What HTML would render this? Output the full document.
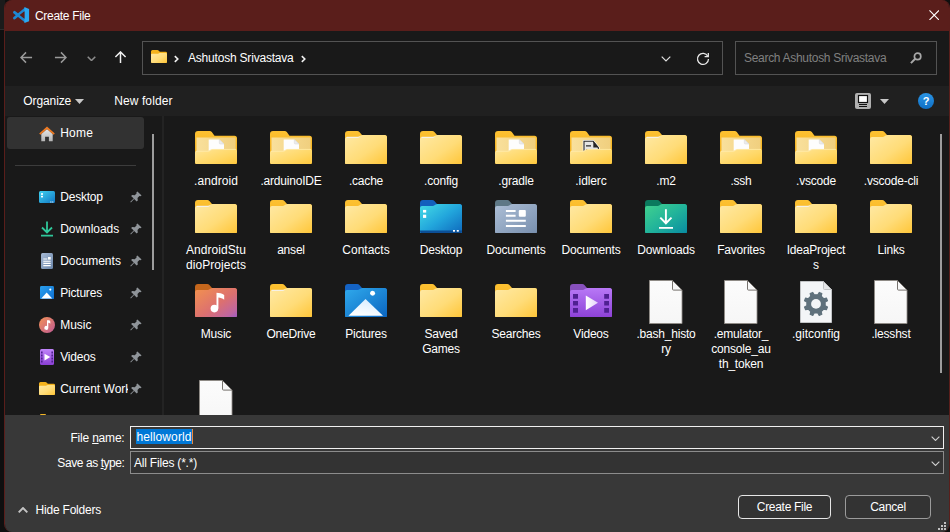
<!DOCTYPE html><html><head><meta charset="utf-8"><title>Create File</title><style>
*{box-sizing:border-box;margin:0;padding:0}
html,body{width:950px;height:532px;overflow:hidden;background:#000}
body{font-family:"Liberation Sans", sans-serif;font-size:12px;color:#fff;position:relative}
.abs{position:absolute}
#outer{position:absolute;left:0;top:0;width:950px;height:532px;background:#0f0f0f}
#strip{position:absolute;left:2px;top:0;width:3px;height:532px;background:#1a1a1a}
#win{position:absolute;left:4px;top:0;width:946px;height:532px;background:#191919;border-radius:8px;overflow:hidden;border-left:1px solid #5a1e1b;border-right:1px solid #5a1e1b}
#title{position:absolute;left:0;top:0;width:100%;height:31px;background:#5a1e1b}
#nav{position:absolute;left:0;top:31px;width:100%;height:55px;background:#191919}
#tool{position:absolute;left:0;top:86px;width:100%;height:30px;background:#202020}
#bottom{position:absolute;left:0;top:415px;width:100%;height:117px;background:#383838}
.box{position:absolute;border:1px solid #535353}
.t{position:absolute;line-height:16px;white-space:nowrap;color:#fff}
.lbl{position:absolute;text-align:center;width:85px;line-height:15px;color:#fff;font-size:12px}
.btn{position:absolute;height:24px;border:1px solid #9b9b9b;border-radius:4px;background:#333;text-align:center;line-height:22px;color:#fff}
</style></head><body>

<svg width="0" height="0" style="position:absolute">
<defs>
<linearGradient id="gTab" x1="0" y1="0" x2="0" y2="1"><stop offset="0" stop-color="#fdc131"/><stop offset="1" stop-color="#efab1d"/></linearGradient>
<linearGradient id="gFront" x1="0" y1="0" x2="1" y2="1"><stop offset="0" stop-color="#ffe9a4"/><stop offset="0.55" stop-color="#ffdc78"/><stop offset="1" stop-color="#ffc536"/></linearGradient>
<linearGradient id="gFlap" x1="0" y1="0" x2="1" y2="1"><stop offset="0" stop-color="#ffe69a"/><stop offset="0.6" stop-color="#ffd765"/><stop offset="1" stop-color="#ffc83c"/></linearGradient>
<linearGradient id="gInner" x1="0" y1="0" x2="1" y2="0"><stop offset="0" stop-color="#f9e09c"/><stop offset="1" stop-color="#f0cf7e"/></linearGradient>
<linearGradient id="gPage" x1="0" y1="0" x2="0" y2="1"><stop offset="0" stop-color="#fcfcfc"/><stop offset="1" stop-color="#f6f6f6"/></linearGradient>
<symbol id="folder" viewBox="0 0 42 33.400">
<path d="M0 3a3 3 0 0 1 3-3h9.300a3 3 0 0 1 2.100.900L17 4H39.500a2.500 2.500 0 0 1 2.500 2.500v24.400a2.500 2.500 0 0 1-2.500 2.500H2.500a2.500 2.500 0 0 1-2.500-2.500z" fill="url(#gTab)"/>
<path d="M0 7.900a2 2 0 0 1 2-2h10.800a3 3 0 0 0 1.700-.550l1.200-.800a3 3 0 0 1 1.700-.550H39.500a2.500 2.500 0 0 1 2.500 2.500v25a2.500 2.500 0 0 1-2.500 2.500H2.500a2.500 2.500 0 0 1-2.500-2.500z" fill="url(#gFront)"/>
<path d="M1.600 6.300h11.400a3 3 0 0 0 1.500-.450" stroke="#f4f4fa" stroke-width="1" fill="none"/>
</symbol>
<symbol id="folderE" viewBox="0 0 42 33.400">
<path d="M0 3a3 3 0 0 1 3-3h9.300a3 3 0 0 1 2.100.900L17 4H39.500a2.500 2.500 0 0 1 2.500 2.500v24.400a2.500 2.500 0 0 1-2.500 2.500H2.500a2.500 2.500 0 0 1-2.500-2.500z" fill="url(#gTab)"/>
<path d="M0 7.900a2 2 0 0 1 2-2h10.800a3 3 0 0 0 1.700-.550l1.200-.800a3 3 0 0 1 1.700-.550H39.500a2.500 2.500 0 0 1 2.500 2.500v25a2.500 2.500 0 0 1-2.500 2.500H2.500a2.500 2.500 0 0 1-2.500-2.500z" fill="url(#gFront)"/>
</symbol>
<symbol id="folderdoc" viewBox="0 0 42 33.400">
<path d="M0 3a3 3 0 0 1 3-3h11.700a3 3 0 0 1 2.100.900L19.500 4.700H39.500a2.500 2.500 0 0 1 2.500 2.500v23.700a2.500 2.500 0 0 1-2.500 2.500H2.500a2.500 2.500 0 0 1-2.500-2.500z" fill="url(#gTab)"/>
<path d="M1.500 6.400h39.100v15H1.500z" fill="url(#gInner)"/>
<path d="M13.700 8.600h10.600l4.700 4.400V21H13.700z" fill="#fdfdfd"/>
<path d="M24.300 8.600v3.400a1 1 0 0 0 1 1h3.700z" fill="#ececec" stroke="#d4d4d4" stroke-width=".5"/>
<path d="M0 21.800a2 2 0 0 1 2-2h11a3 3 0 0 0 1.700-.500l1.400-.900a3 3 0 0 1 1.700-.500H40a2 2 0 0 1 2 2v11a2.500 2.500 0 0 1-2.500 2.500H2.500a2.500 2.500 0 0 1-2.500-2.500z" fill="url(#gFlap)"/>
<path d="M1 20.300h12a3 3 0 0 0 1.700-.500l1.400-.900a3 3 0 0 1 1.700-.500H41" stroke="#ffeeb8" stroke-width=".8" fill="none" opacity=".8"/>
</symbol>
<symbol id="folderidl" viewBox="0 0 42 33.400">
<path d="M0 3a3 3 0 0 1 3-3h11.700a3 3 0 0 1 2.100.900L19.500 4.700H39.500a2.500 2.500 0 0 1 2.500 2.500v23.700a2.500 2.500 0 0 1-2.500 2.500H2.500a2.500 2.500 0 0 1-2.500-2.500z" fill="url(#gTab)"/>
<path d="M1.500 6.400h39.100v15H1.500z" fill="url(#gInner)"/>
<path d="M13.200 9.500h10.400l5.600 6.800V21H13.200z" fill="#e9e9e9" stroke="#ffffff" stroke-width=".8"/>
<path d="M14 10.300h9.200l5.200 6.300V21H14z" fill="#e4e4e4" stroke="#2b2b2b" stroke-width="1.100"/>
<path d="M23.300 10.300v6.300h5.200z" fill="#262626"/>
<path d="M16 14.900h5M16 18.500h3" stroke="#2b2b2b" stroke-width="1.100"/>
<path d="M0 21.800a2 2 0 0 1 2-2h11a3 3 0 0 0 1.700-.500l1.400-.900a3 3 0 0 1 1.700-.500H40a2 2 0 0 1 2 2v11a2.500 2.500 0 0 1-2.500 2.500H2.500a2.500 2.500 0 0 1-2.500-2.500z" fill="url(#gFlap)"/>
<path d="M1 20.300h12a3 3 0 0 0 1.700-.500l1.400-.900a3 3 0 0 1 1.700-.500H41" stroke="#ffeeb8" stroke-width=".8" fill="none" opacity=".8"/>
</symbol>
<symbol id="folder16" viewBox="0 0 16 13">
<path d="M0 1.500a1.500 1.500 0 0 1 1.500-1.500h5a1.500 1.500 0 0 1 1.050.430L8.800 1.700h5.900a1.300 1.300 0 0 1 1.300 1.300v8.700a1.300 1.300 0 0 1-1.300 1.300H1.300a1.300 1.300 0 0 1-1.300-1.300z" fill="#f4b21c"/>
<path d="M0 4.800a1 1 0 0 1 1-1h5.700a1.500 1.500 0 0 0 .8-.230l.5-.340a1.500 1.500 0 0 1 .8-.230h5.900a1.300 1.300 0 0 1 1.300 1.300v7.400a1.300 1.300 0 0 1-1.300 1.300H1.300a1.300 1.300 0 0 1-1.300-1.300z" fill="url(#gFront)"/>
</symbol>
<symbol id="file" viewBox="0 0 33.600 44">
<path d="M.5.500h23l9.600 9.600V43.500H.5z" fill="url(#gPage)" stroke="#8f8b86" stroke-width="1"/>
<path d="M23.500.5v8.600a1 1 0 0 0 1 1h8.600z" fill="#f7f7f7" stroke="#77736e" stroke-width="1"/>
</symbol>
<symbol id="pin" viewBox="0 0 12 12">
<path d="M7.400.4l4.200 4.200-1.200.7-1-.3-1.900 1.900.3 2.600-1.100 1-2.600-2.600-3.200 3.500-.6-.6 3.400-3.300L1.100 4.900l1.100-1 2.600.3 1.900-1.900-.3-1z" fill="#8f9499"/>
</symbol>
</defs>
</svg>

<div id="outer"></div><div class="abs" style="left:0;top:0;width:5px;height:29px;background:#1b1b1b"></div><div class="abs" style="left:0;top:29px;width:5px;height:1px;background:#2c2c2c"></div>
<div id="win">
<div id="title">
<svg class="abs" style="left:7px;top:0px" width="20" height="31" viewBox="0 0 20 31"><path d="M2.500 12.300L13 20.600M2.500 18L13 9.400" stroke="#1d88d4" stroke-width="2.900" stroke-linecap="round" fill="none"/><path d="M12.400 7.100l4.700 1.900v12.200l-4.700 1.900z" fill="#2ba8f1"/><path d="M12.400 11.300L7.700 15l4.700 3.700z" fill="#5a1e1b"/></svg>
<div class="t" style="left:30px;top:8px;letter-spacing:-0.3px;">Create File</div>
<svg class="abs" style="left:923.7px;top:9.700px" width="10.400" height="10.400" viewBox="0 0 11 11"><path d="M.5.500l10 10M10.500.5l-10 10" stroke="#fff" stroke-width="1.150" fill="none"/></svg>
</div>
<div id="nav">
<svg class="abs" style="left:14.5px;top:20.4px" width="13" height="13" viewBox="0 0 14 14"><path d="M13 7H1.500M6.500 1.500L1 7l5.500 5.500" stroke="#9a9a9a" stroke-width="1.600" fill="none"/></svg>
<svg class="abs" style="left:48.8px;top:20.4px" width="13" height="13" viewBox="0 0 14 14"><path d="M1 7h11.500M7.500 1.500L13 7l-5.500 5.500" stroke="#9a9a9a" stroke-width="1.600" fill="none"/></svg>
<svg class="abs" style="left:82px;top:24.5px" width="9" height="5.400" viewBox="0 0 10 6"><path d="M.8.800L5 5l4.200-4.200" stroke="#8c8c8c" stroke-width="1.700" fill="none"/></svg>
<svg class="abs" style="left:109px;top:20.4px" width="13" height="13" viewBox="0 0 14 14"><path d="M7 13V1.500M1.500 6.500L7 1l5.500 5.500" stroke="#f0f0f0" stroke-width="1.600" fill="none"/></svg>
<div class="box" style="left:137px;top:10px;width:581px;height:34px"></div>
<svg class="abs" style="left:146px;top:19px" width="16" height="13"><use href="#folder16" width="16" height="13"/></svg>
<svg class="abs" style="left:168.8px;top:23.6px" width="5" height="8" viewBox="0 0 5 8"><path d="M.8 1.100L3.800 4 .8 6.900" stroke="#f0f0f0" stroke-width="1.600" fill="none"/></svg>
<div class="t" style="left:183px;top:19px;letter-spacing:-0.2px;">Ashutosh Srivastava</div>
<svg class="abs" style="left:296px;top:23.6px" width="5" height="8" viewBox="0 0 5 8"><path d="M.8 1.100L3.800 4 .8 6.900" stroke="#f0f0f0" stroke-width="1.600" fill="none"/></svg>
<svg class="abs" style="left:656px;top:25px" width="10" height="6" viewBox="0 0 10 6"><path d="M.7.700L5 5 9.300.7" stroke="#e0e0e0" stroke-width="1.200" fill="none"/></svg>
<svg class="abs" style="left:691px;top:21px" width="14" height="14" viewBox="0 0 14 14"><path d="M11.800 4.200A5.500 5.500 0 1 0 12.500 7" stroke="#e8e8e8" stroke-width="1.300" fill="none"/><path d="M12.300 1v3.700H8.600" stroke="#e8e8e8" stroke-width="1.300" fill="none"/></svg>
<div class="box" style="left:730px;top:10px;width:202px;height:34px"></div>
<div class="t" style="left:739px;top:19px;letter-spacing:-0.3px;color:#808080;">Search Ashutosh Srivastava</div>
<svg class="abs" style="left:905px;top:21px" width="12" height="12" viewBox="0 0 12 12"><circle cx="7.600" cy="4.400" r="3.200" stroke="#a8a8a8" stroke-width="1.700" fill="none"/><path d="M5.200 6.800L.9 11.100" stroke="#a8a8a8" stroke-width="2"/></svg>
</div>
<div id="tool">
<div class="t" style="left:18.3px;top:7px;letter-spacing:-0.1px;">Organize</div>
<svg class="abs" style="left:70px;top:13px" width="9" height="5" viewBox="0 0 9 5"><path d="M0 0h9L4.500 5z" fill="#c8c8c8"/></svg>
<div class="t" style="left:109.2px;top:7px;letter-spacing:0.1px;">New folder</div>
<svg class="abs" style="left:850px;top:7px" width="16" height="16" viewBox="0 0 16 16"><rect width="16" height="16" rx="2" fill="#b0b0b0"/><rect x="3.500" y="2.500" width="9" height="7" fill="#fff" stroke="#111" stroke-width="1.200"/><path d="M4 11.500h8M4 13.500h8" stroke="#111" stroke-width="1"/></svg>
<svg class="abs" style="left:875px;top:13px" width="9" height="5" viewBox="0 0 9 5"><path d="M0 0h9L4.500 5z" fill="#c8c8c8"/></svg>
<svg class="abs" style="left:913px;top:7px" width="16" height="16" viewBox="0 0 16 16"><defs><linearGradient id="gh" x1="0" y1="0" x2="0" y2="1"><stop offset="0" stop-color="#2a95e6"/><stop offset="1" stop-color="#0f6fc4"/></linearGradient></defs><circle cx="8" cy="8" r="8" fill="url(#gh)"/><text x="8" y="12" text-anchor="middle" font-family='"Liberation Sans",sans-serif' font-weight="bold" font-size="11" fill="#fff">?</text></svg>
</div>
<div class="abs" style="left:2px;top:117px;width:137px;height:31.500px;background:#323232;border-radius:3px"></div>
<div class="abs" style="left:10px;top:165px;width:121px;height:1px;background:#3c3c3c"></div>
<div class="abs" style="left:147px;top:134px;width:2px;height:136px;background:#9d9d9d"></div>
<div class="abs" style="left:157px;top:116px;width:2px;height:299px;background:#232323"></div>
<div class="abs" style="left:935px;top:134px;width:2px;height:239px;background:#9d9d9d"></div>
<svg class="abs" style="left:34px;top:125.5px" width="16" height="16" viewBox="0 0 16 16"><defs><linearGradient id="ghm" x1="0" y1="0" x2="0" y2="1"><stop offset="0" stop-color="#e6e6e6"/><stop offset="1" stop-color="#b4b4b4"/></linearGradient></defs><path d="M2.300 8L8 3l5.700 5v7.300H9.900v-4.500H6.100v4.500H2.300z" fill="url(#ghm)"/><path d="M8 .4L.2 7.400l1.200 1.400L8 3l6.600 5.800 1.200-1.400z" fill="#ee7a22"/></svg>
<div class="t" style="left:55.2px;top:125px;letter-spacing:0.25px;">Home</div>
<svg class="abs" style="left:34px;top:191px" width="16" height="12" viewBox="0 0 16 12"><defs><linearGradient id="gd" x1="0" y1="0" x2="1" y2="1"><stop offset="0" stop-color="#40d2ee"/><stop offset="1" stop-color="#1176c4"/></linearGradient></defs><rect width="16" height="12" rx="1.500" fill="url(#gd)"/><rect x="2" y="2.200" width="2" height="1.600" fill="#fff"/><rect x="2" y="4.800" width="2" height="1.600" fill="#fff"/><rect x="11.300" y="10.500" width="1.100" height="1" fill="#fff"/><rect x="13.200" y="10.500" width="1.100" height="1" fill="#fff"/></svg>
<div class="t" style="left:55.2px;top:189px;letter-spacing:-0.2px;">Desktop</div>
<svg class="abs" style="left:125px;top:191px" width="12" height="12"><use href="#pin" width="12" height="12"/></svg>
<svg class="abs" style="left:35px;top:221px" width="14" height="16" viewBox="0 0 14 16"><path d="M7 .5v10.500M2 6.500l5 5 5-5" stroke="#2fc79a" stroke-width="1.800" fill="none"/><path d="M1 14.700h12" stroke="#2fc79a" stroke-width="1.800"/></svg>
<div class="t" style="left:55.2px;top:221px;letter-spacing:-0.05px;">Downloads</div>
<svg class="abs" style="left:125px;top:223px" width="12" height="12"><use href="#pin" width="12" height="12"/></svg>
<svg class="abs" style="left:36px;top:253px" width="12" height="16" viewBox="0 0 12 16"><defs><linearGradient id="gsd" x1="0" y1="0" x2="1" y2="1"><stop offset="0" stop-color="#a8bbd6"/><stop offset="1" stop-color="#6a85a8"/></linearGradient></defs><rect width="12" height="16" rx="1.500" fill="url(#gsd)"/><path d="M2.300 6h4M2.300 8.200h7.400M2.300 10.400h7.400M2.300 12.600h7.400" stroke="#fff" stroke-width="1.100"/><rect x="7" y="4" width="2.700" height="2.600" fill="#fff"/></svg>
<div class="t" style="left:55.2px;top:253px;letter-spacing:0px;">Documents</div>
<svg class="abs" style="left:125px;top:255px" width="12" height="12"><use href="#pin" width="12" height="12"/></svg>
<svg class="abs" style="left:35px;top:286px" width="14" height="13.400" viewBox="0 0 14 13.400"><defs><linearGradient id="gsp" x1="0" y1="0" x2="1" y2="1"><stop offset="0" stop-color="#2aa0ee"/><stop offset="1" stop-color="#0f6fd0"/></linearGradient></defs><rect width="14" height="13.400" rx="1.500" fill="url(#gsp)"/><path d="M1.200 12.400L6.700 6.500l5.500 5.900z" fill="#fff"/><circle cx="10.300" cy="3.600" r="1.100" fill="#fff"/></svg>
<div class="t" style="left:55.2px;top:285px;letter-spacing:-0.2px;">Pictures</div>
<svg class="abs" style="left:125px;top:287px" width="12" height="12"><use href="#pin" width="12" height="12"/></svg>
<svg class="abs" style="left:34px;top:317px" width="16" height="16" viewBox="0 0 16 16"><defs><linearGradient id="gm" x1="0" y1="0" x2="1" y2="1"><stop offset="0" stop-color="#f39256"/><stop offset="1" stop-color="#bf5a94"/></linearGradient></defs><circle cx="8" cy="8" r="8" fill="url(#gm)"/><path d="M8 3.300c2-.4 3 .2 3.300 1.200v2.200C10.800 6 10 5.700 9.300 5.700v5.200a2 2 0 1 1-1.300-1.900z" fill="#fff"/></svg>
<div class="t" style="left:55.2px;top:317px;letter-spacing:0px;">Music</div>
<svg class="abs" style="left:125px;top:319px" width="12" height="12"><use href="#pin" width="12" height="12"/></svg>
<svg class="abs" style="left:35px;top:349px" width="14" height="16" viewBox="0 0 14 16"><defs><linearGradient id="gsv" x1="0" y1="0" x2="0" y2="1"><stop offset="0" stop-color="#c084fa"/><stop offset="1" stop-color="#8a3fd4"/></linearGradient></defs><rect width="14" height="16" rx="1.500" fill="url(#gsv)"/><path d="M4.500 4.800v6.600L10.300 8z" fill="#fff"/><path d="M1 2.600h1.600v1.800H1zM1 5.600h1.600v1.800H1zM1 8.600h1.600v1.800H1zM1 11.600h1.600v1.800H1zM11.400 2.600H13v1.800h-1.600zM11.400 5.600H13v1.800h-1.600zM11.400 8.600H13v1.800h-1.600zM11.400 11.600H13v1.800h-1.600z" fill="#4f2090"/></svg>
<div class="t" style="left:55.2px;top:349px;letter-spacing:-0.2px;">Videos</div>
<svg class="abs" style="left:125px;top:351px" width="12" height="12"><use href="#pin" width="12" height="12"/></svg>
<svg class="abs" style="left:34px;top:382px" width="16" height="13"><use href="#folder16" width="16" height="13"/></svg>
<div class="t" style="left:55.2px;top:381px;letter-spacing:0px;width:68px;overflow:hidden;">Current Work</div>
<svg class="abs" style="left:125px;top:383px" width="12" height="12"><use href="#pin" width="12" height="12"/></svg>
<div class="abs" style="left:35px;top:414px;width:6px;height:2px;background:#f2b526;border-radius:1px 1px 0 0"></div>
<svg class="abs" style="left:190px;top:131px" width="42" height="33.400"><use href="#folderdoc" width="42" height="33.400"/></svg>
<div class="lbl" style="left:168.5px;top:174px;letter-spacing:0.05px">.android</div>
<svg class="abs" style="left:265px;top:131px" width="42" height="33.400"><use href="#folderdoc" width="42" height="33.400"/></svg>
<div class="lbl" style="left:243.5px;top:174px;letter-spacing:-0.2px">.arduinoIDE</div>
<svg class="abs" style="left:340px;top:131px" width="42" height="33.400"><use href="#folder" width="42" height="33.400"/></svg>
<div class="lbl" style="left:318.5px;top:174px;letter-spacing:-0.2px">.cache</div>
<svg class="abs" style="left:415px;top:131px" width="42" height="33.400"><use href="#folder" width="42" height="33.400"/></svg>
<div class="lbl" style="left:393.5px;top:174px;letter-spacing:-0.2px">.config</div>
<svg class="abs" style="left:490px;top:131px" width="42" height="33.400"><use href="#folderdoc" width="42" height="33.400"/></svg>
<div class="lbl" style="left:468.5px;top:174px;letter-spacing:-0.2px">.gradle</div>
<svg class="abs" style="left:565px;top:131px" width="42" height="33.400"><use href="#folderidl" width="42" height="33.400"/></svg>
<div class="lbl" style="left:543.5px;top:174px;letter-spacing:-0.1px">.idlerc</div>
<svg class="abs" style="left:640px;top:131px" width="42" height="33.400"><use href="#folder" width="42" height="33.400"/></svg>
<div class="lbl" style="left:618.5px;top:174px;letter-spacing:-0.2px">.m2</div>
<svg class="abs" style="left:715px;top:131px" width="42" height="33.400"><use href="#folderdoc" width="42" height="33.400"/></svg>
<div class="lbl" style="left:693.5px;top:174px;letter-spacing:-0.2px">.ssh</div>
<svg class="abs" style="left:790px;top:131px" width="42" height="33.400"><use href="#folderdoc" width="42" height="33.400"/></svg>
<div class="lbl" style="left:768.5px;top:174px;letter-spacing:-0.2px">.vscode</div>
<svg class="abs" style="left:865px;top:131px" width="42" height="33.400"><use href="#folderE" width="42" height="33.400"/></svg>
<div class="lbl" style="left:843.5px;top:174px;letter-spacing:-0.2px">.vscode-cli</div>
<svg class="abs" style="left:190px;top:200px" width="42" height="33.400"><use href="#folder" width="42" height="33.400"/></svg>
<div class="lbl" style="left:168.5px;top:243px;letter-spacing:0.05px">AndroidStu<br>dioProjects</div>
<svg class="abs" style="left:265px;top:200px" width="42" height="33.400"><use href="#folderE" width="42" height="33.400"/></svg>
<div class="lbl" style="left:243.5px;top:243px;letter-spacing:-0.2px">ansel</div>
<svg class="abs" style="left:340px;top:200px" width="42" height="33.400"><use href="#folderE" width="42" height="33.400"/></svg>
<div class="lbl" style="left:318.5px;top:243px;letter-spacing:0px">Contacts</div>
<svg class="abs" style="left:415px;top:200px" width="42" height="33.400" viewBox="0 0 42 33.400"><defs><linearGradient id="gdk" x1="0" y1="0" x2="1" y2="1"><stop offset="0" stop-color="#45dce6"/><stop offset="0.5" stop-color="#22a6dc"/><stop offset="1" stop-color="#0e67bc"/></linearGradient></defs><path d="M0 3a3 3 0 0 1 3-3h9.300a3 3 0 0 1 2.100.900L17 4H39.500a2.500 2.500 0 0 1 2.500 2.500v24.400a2.500 2.500 0 0 1-2.500 2.500H2.500a2.500 2.500 0 0 1-2.500-2.500z" fill="#1360bd"/><path d="M0 7.900a2 2 0 0 1 2-2h10.800a3 3 0 0 0 1.700-.550l1.200-.800a3 3 0 0 1 1.700-.550H39.500a2.500 2.500 0 0 1 2.500 2.500v25a2.500 2.500 0 0 1-2.500 2.500H2.500a2.500 2.500 0 0 1-2.500-2.500z" fill="url(#gdk)"/><path d="M0 30.600h42v.3a2.500 2.500 0 0 1-2.500 2.500h-37a2.500 2.500 0 0 1-2.500-2.500z" fill="#0c4f96"/><rect x="3" y="9.900" width="3.200" height="2.700" fill="#fff"/><rect x="3" y="14.700" width="3.200" height="3.200" fill="#fff"/><rect x="33" y="30" width="2" height="1.700" fill="#fff"/><rect x="36.800" y="30" width="2" height="1.700" fill="#fff"/></svg>
<div class="lbl" style="left:393.5px;top:243px;letter-spacing:-0.2px">Desktop</div>
<svg class="abs" style="left:490px;top:200px" width="42" height="33.400" viewBox="0 0 42 33.400"><defs><linearGradient id="gdc" x1="0" y1="0" x2="1" y2="1"><stop offset="0" stop-color="#adbfd6"/><stop offset="1" stop-color="#788fae"/></linearGradient></defs><path d="M0 3a3 3 0 0 1 3-3h9.300a3 3 0 0 1 2.100.900L17 4H39.500a2.500 2.500 0 0 1 2.500 2.500v24.400a2.500 2.500 0 0 1-2.500 2.500H2.500a2.500 2.500 0 0 1-2.500-2.500z" fill="#5e7886"/><path d="M0 7.900a2 2 0 0 1 2-2h10.800a3 3 0 0 0 1.700-.550l1.200-.800a3 3 0 0 1 1.700-.550H39.500a2.500 2.500 0 0 1 2.500 2.500v25a2.500 2.500 0 0 1-2.500 2.500H2.500a2.500 2.500 0 0 1-2.500-2.500z" fill="url(#gdc)"/><path d="M10.900 10.900h9.700M10.900 15.700h9.700M10.900 20.700h19.900M10.900 25.900h19.900" stroke="#fff" stroke-width="2"/><rect x="23.800" y="9.900" width="7" height="6.800" rx="1" fill="#fff"/></svg>
<div class="lbl" style="left:468.5px;top:243px;letter-spacing:-0.2px">Documents</div>
<svg class="abs" style="left:565px;top:200px" width="42" height="33.400"><use href="#folderE" width="42" height="33.400"/></svg>
<div class="lbl" style="left:543.5px;top:243px;letter-spacing:-0.2px">Documents</div>
<svg class="abs" style="left:640px;top:200px" width="42" height="33.400" viewBox="0 0 42 33.400"><defs><linearGradient id="gdn" x1="0" y1="0" x2="1" y2="1"><stop offset="0" stop-color="#42d28e"/><stop offset="0.5" stop-color="#22b49a"/><stop offset="1" stop-color="#088aa2"/></linearGradient></defs><path d="M0 3a3 3 0 0 1 3-3h9.300a3 3 0 0 1 2.100.900L17 4H39.500a2.500 2.500 0 0 1 2.500 2.500v24.400a2.500 2.500 0 0 1-2.500 2.500H2.500a2.500 2.500 0 0 1-2.500-2.500z" fill="#0b7a5e"/><path d="M0 7.900a2 2 0 0 1 2-2h10.800a3 3 0 0 0 1.700-.550l1.200-.800a3 3 0 0 1 1.700-.550H39.500a2.500 2.500 0 0 1 2.500 2.500v25a2.500 2.500 0 0 1-2.500 2.500H2.500a2.500 2.500 0 0 1-2.500-2.500z" fill="url(#gdn)"/><path d="M20.900 9.300v13.500M15.300 17.700l5.600 5.600 5.600-5.600" stroke="#fff" stroke-width="1.900" fill="none"/><path d="M14 27.900h14" stroke="#fff" stroke-width="1.800"/></svg>
<div class="lbl" style="left:618.5px;top:243px;letter-spacing:-0.2px">Downloads</div>
<svg class="abs" style="left:715px;top:200px" width="42" height="33.400"><use href="#folderE" width="42" height="33.400"/></svg>
<div class="lbl" style="left:693.5px;top:243px;letter-spacing:-0.2px">Favorites</div>
<svg class="abs" style="left:790px;top:200px" width="42" height="33.400"><use href="#folder" width="42" height="33.400"/></svg>
<div class="lbl" style="left:768.5px;top:243px;letter-spacing:-0.2px">IdeaProject<br>s</div>
<svg class="abs" style="left:865px;top:200px" width="42" height="33.400"><use href="#folderE" width="42" height="33.400"/></svg>
<div class="lbl" style="left:843.5px;top:243px;letter-spacing:-0.2px">Links</div>
<svg class="abs" style="left:190px;top:284px" width="42" height="33.400" viewBox="0 0 42 33.400"><defs><linearGradient id="gmu" x1="0" y1="0" x2="1" y2="1"><stop offset="0" stop-color="#f3924e"/><stop offset="0.55" stop-color="#dc7070"/><stop offset="0.85" stop-color="#c066a0"/><stop offset="1" stop-color="#9a5cc8"/></linearGradient></defs><path d="M0 3a3 3 0 0 1 3-3h9.300a3 3 0 0 1 2.100.900L17 4H39.500a2.500 2.500 0 0 1 2.500 2.500v24.400a2.500 2.500 0 0 1-2.500 2.500H2.500a2.500 2.500 0 0 1-2.500-2.500z" fill="#c4661c"/><path d="M0 7.900a2 2 0 0 1 2-2h10.800a3 3 0 0 0 1.700-.550l1.200-.800a3 3 0 0 1 1.700-.550H39.500a2.500 2.500 0 0 1 2.500 2.500v25a2.500 2.500 0 0 1-2.500 2.500H2.500a2.500 2.500 0 0 1-2.500-2.500z" fill="url(#gmu)"/><path d="M21.500 8.700C24 8.700 27.500 9.500 29.200 10.900V15.700C27.500 14.400 25.500 13.700 23.400 13.500V24.600H21.500z" fill="#fff"/><circle cx="19.400" cy="24.600" r="3.800" fill="#fff"/></svg>
<div class="lbl" style="left:168.5px;top:327px;letter-spacing:-0.2px">Music</div>
<svg class="abs" style="left:265px;top:284px" width="42" height="33.400"><use href="#folder" width="42" height="33.400"/></svg>
<div class="lbl" style="left:243.5px;top:327px;letter-spacing:-0.2px">OneDrive</div>
<svg class="abs" style="left:340px;top:284px" width="42" height="33.400" viewBox="0 0 42 33.400"><defs><linearGradient id="gpc" x1="0" y1="0" x2="1" y2="1"><stop offset="0" stop-color="#30aaec"/><stop offset="1" stop-color="#0a64c0"/></linearGradient></defs><path d="M0 3a3 3 0 0 1 3-3h9.300a3 3 0 0 1 2.100.900L17 4H39.500a2.500 2.500 0 0 1 2.500 2.500v24.400a2.500 2.500 0 0 1-2.500 2.500H2.500a2.500 2.500 0 0 1-2.500-2.500z" fill="#1463c4"/><path d="M0 7.900a2 2 0 0 1 2-2h10.800a3 3 0 0 0 1.700-.550l1.200-.800a3 3 0 0 1 1.700-.550H39.500a2.500 2.500 0 0 1 2.500 2.500v25a2.500 2.500 0 0 1-2.500 2.500H2.500a2.500 2.500 0 0 1-2.500-2.500z" fill="url(#gpc)"/><defs><linearGradient id="gmt" x1="0.700" y1="0" x2="0.300" y2="1"><stop offset="0" stop-color="#d6ecff"/><stop offset="1" stop-color="#ffffff"/></linearGradient></defs><path d="M3.500 31.700L20.500 15l17.500 16.700z" fill="url(#gmt)"/><circle cx="27.600" cy="9.300" r="2.500" fill="#fff"/></svg>
<div class="lbl" style="left:318.5px;top:327px;letter-spacing:-0.2px">Pictures</div>
<svg class="abs" style="left:415px;top:284px" width="42" height="33.400"><use href="#folderE" width="42" height="33.400"/></svg>
<div class="lbl" style="left:393.5px;top:327px;letter-spacing:-0.2px">Saved<br>Games</div>
<svg class="abs" style="left:490px;top:284px" width="42" height="33.400"><use href="#folderE" width="42" height="33.400"/></svg>
<div class="lbl" style="left:468.5px;top:327px;letter-spacing:-0.2px">Searches</div>
<svg class="abs" style="left:565px;top:284px" width="42" height="33.400" viewBox="0 0 42 33.400"><defs><linearGradient id="gvd" x1="0" y1="0" x2="0" y2="1"><stop offset="0" stop-color="#b878f6"/><stop offset="1" stop-color="#8c40d6"/></linearGradient></defs><path d="M0 3a3 3 0 0 1 3-3h9.300a3 3 0 0 1 2.100.900L17 4H39.500a2.500 2.500 0 0 1 2.500 2.500v24.400a2.500 2.500 0 0 1-2.500 2.500H2.500a2.500 2.500 0 0 1-2.500-2.500z" fill="#8750bc"/><path d="M0 7.900a2 2 0 0 1 2-2h10.800a3 3 0 0 0 1.700-.550l1.200-.800a3 3 0 0 1 1.700-.550H39.500a2.500 2.500 0 0 1 2.500 2.500v25a2.500 2.500 0 0 1-2.500 2.500H2.500a2.500 2.500 0 0 1-2.500-2.500z" fill="url(#gvd)"/><defs><linearGradient id="gpl" x1="0" y1="0" x2="1" y2="0"><stop offset="0" stop-color="#ffffff"/><stop offset="1" stop-color="#e4d0fa"/></linearGradient></defs><path d="M15.800 11.500v14.700L28 18.800z" fill="url(#gpl)"/><path d="M3 10h5v4.700H3zM3 17h5v4.500H3zM3 24h5v4.700H3zM34.200 10H39v4.700h-4.800zM34.200 17H39v4.500h-4.800zM34.200 24H39v4.700h-4.800z" fill="#4f2092"/></svg>
<div class="lbl" style="left:543.5px;top:327px;letter-spacing:-0.2px">Videos</div>
<svg class="abs" style="left:644.3px;top:279.9px" width="33.600" height="44"><use href="#file" width="33.600" height="44"/></svg>
<div class="lbl" style="left:618.5px;top:327px;letter-spacing:-0.2px">.bash_histo<br>ry</div>
<svg class="abs" style="left:719.3px;top:279.9px" width="33.600" height="44"><use href="#file" width="33.600" height="44"/></svg>
<div class="lbl" style="left:693.5px;top:327px;letter-spacing:-0.2px">.emulator_<br>console_au<br>th_token</div>
<svg class="abs" style="left:795px;top:280.7px" width="32" height="42" viewBox="0 0 32 42"><path d="M.5.500h23l8 8V41.500H.5z" fill="#f3f5f7" stroke="#c2c4c6" stroke-width="1"/><path d="M23.500.5v7a1 1 0 0 0 1 1h7z" fill="#e4e6e8" stroke="#bcbec0" stroke-width=".9"/><path d="M17.81 13.78 L19.23 11.45 L21.81 12.52 L21.17 15.17 L23.73 17.73 L26.38 17.09 L27.45 19.67 L25.12 21.09 L25.12 24.71 L27.45 26.13 L26.38 28.71 L23.73 28.07 L21.17 30.63 L21.81 33.28 L19.23 34.35 L17.81 32.02 L14.19 32.02 L12.77 34.35 L10.19 33.28 L10.83 30.63 L8.27 28.07 L5.62 28.71 L4.55 26.13 L6.88 24.71 L6.88 21.09 L4.55 19.67 L5.62 17.09 L8.27 17.73 L10.83 15.17 L10.19 12.52 L12.77 11.45 L14.19 13.78z" fill="#5f717c" stroke="#5f717c" stroke-width="1.200" stroke-linejoin="round"/><circle cx="16" cy="22.900" r="4.900" fill="#f3f5f7"/></svg>
<div class="lbl" style="left:768.5px;top:327px;letter-spacing:0px">.gitconfig</div>
<svg class="abs" style="left:869.3px;top:279.9px" width="33.600" height="44"><use href="#file" width="33.600" height="44"/></svg>
<div class="lbl" style="left:843.5px;top:327px;letter-spacing:-0.2px">.lesshst</div>
<svg class="abs" style="left:194.3px;top:379.9px" width="33.600" height="44"><use href="#file" width="33.600" height="44"/></svg>
<div id="bottom">
<div class="t" style="left:-5px;top:15px;letter-spacing:-0.2px;left:1px;width:118.500px;text-align:right;">File <u>n</u>ame:</div>
<div class="t" style="left:-5px;top:40px;letter-spacing:-0.43px;left:1px;width:118.500px;text-align:right;">Save as <u>t</u>ype:</div>
<div class="abs" style="left:125px;top:11px;width:814px;height:23px;border:1px solid #f0f0f0;background:#373737"></div>
<div class="abs" style="left:130.8px;top:13.8px;width:57.500px;height:15px;background:#0078d7;border-right:1px solid #ee8a3c"></div>
<div class="t" style="left:131.5px;top:14px;letter-spacing:0.1px;">helloworld</div>
<div class="abs" style="left:125px;top:36px;width:814px;height:23px;border:1px solid #8c8c8c;background:#333"></div>
<div class="t" style="left:129px;top:40px;letter-spacing:-0.2px;">All Files (*.*)</div>
<svg class="abs" style="left:925.6px;top:20.5px" width="9" height="5.400" viewBox="0 0 10 6"><path d="M.7.700L5 5 9.300.7" stroke="#cfcfcf" stroke-width="1.200" fill="none"/></svg>
<svg class="abs" style="left:925.6px;top:45.5px" width="9" height="5.400" viewBox="0 0 10 6"><path d="M.7.700L5 5 9.300.7" stroke="#cfcfcf" stroke-width="1.200" fill="none"/></svg>
<svg class="abs" style="left:13px;top:92px" width="10" height="6" viewBox="0 0 10 6"><path d="M.7 5.300L5 1l4.300 4.300" stroke="#c4c4c4" stroke-width="1.900" fill="none"/></svg>
<div class="t" style="left:30.5px;top:87px;letter-spacing:-0.2px;">Hide Folders</div>
<div class="btn" style="left:733px;top:80px;width:93px;border-color:#e6e6e6;letter-spacing:-0.3px">Create File</div>
<div class="btn" style="left:840px;top:80px;width:86px;letter-spacing:-0.3px">Cancel</div>
<svg class="abs" style="left:933px;top:107px" width="8" height="8"><rect x="6" y="0" width="2" height="2" fill="#c0c0c0"/><rect x="3" y="3" width="2" height="2" fill="#c0c0c0"/><rect x="6" y="3" width="2" height="2" fill="#c0c0c0"/><rect x="0" y="6" width="2" height="2" fill="#c0c0c0"/><rect x="3" y="6" width="2" height="2" fill="#c0c0c0"/><rect x="6" y="6" width="2" height="2" fill="#c0c0c0"/></svg>
</div>
</div>
</body></html>
